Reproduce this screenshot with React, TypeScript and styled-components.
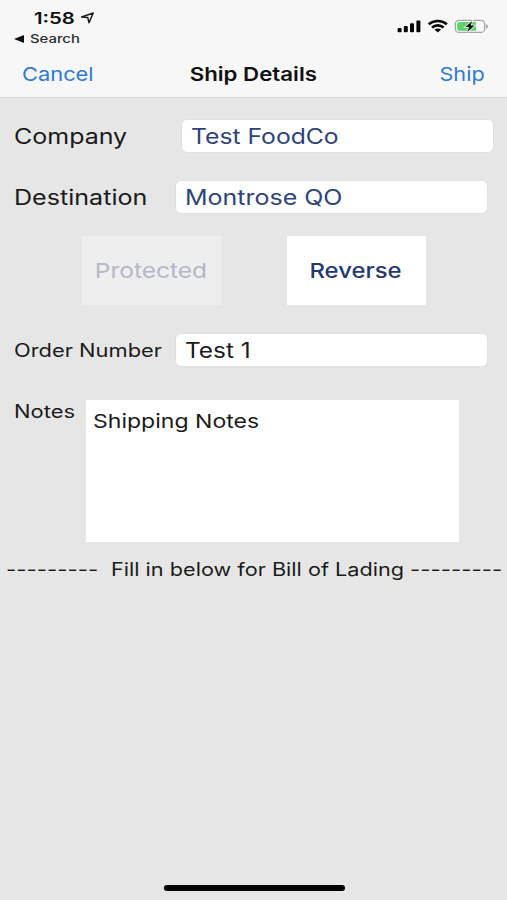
import React from 'react';
import styled, { createGlobalStyle } from 'styled-components';

const GlobalStyle = createGlobalStyle`
  * { box-sizing: border-box; }
  body { margin: 0; background: #e6e6e6; }
`;

const Screen = styled.div`
  width: 507px;
  height: 900px;
  display: flex;
  flex-direction: column;
  overflow: hidden;
  background: #e6e6e6;
  color: #1b1b1b;
  font-family: Inter, sans-serif;
`;

/* Wide lettering: glyphs keep their height and are extended sideways. */
const Wide = styled.span<{ $size: number; $stretch: number; $weight?: number; $origin?: string }>`
  display: inline-block;
  vertical-align: top;
  white-space: pre;
  font-size: ${p => p.$size}px;
  font-weight: ${p => p.$weight ?? 400};
  transform: scaleX(${p => p.$stretch});
  transform-origin: ${p => p.$origin ?? 'left'} center;
`;

const Header = styled.header`
  height: 98px;
  display: flex;
  flex-direction: column;
  background: #f7f7f7;
  border-bottom: 1px solid #d9d9d9;
`;

const StatusBar = styled.div`
  height: 50px;
  display: flex;
  justify-content: space-between;
`;

const StatusLeft = styled.div`
  padding-top: 8px;
  color: #111;
`;

const Clock = styled.div`
  display: flex;
  align-items: center;
  height: 20px;
  padding-left: 34px;
  line-height: 20px;
`;

const ClockTime = styled.div`
  width: 46px;
`;

const BackLink = styled.div`
  display: flex;
  align-items: center;
  gap: 6px;
  height: 22px;
  padding-left: 14px;
  line-height: 20px;
  color: #2c2c2c;
`;

const StatusIcons = styled.div`
  display: flex;
  align-items: center;
  height: 24px;
  margin-top: 14px;
  padding-right: 18px;
`;

const NavBar = styled.nav`
  height: 48px;
  display: grid;
  grid-template-columns: 1fr auto 1fr;
  align-items: center;
  padding: 2px 22px 0 22px;
  line-height: 24px;
`;

const NavAction = styled.a<{ $end?: boolean }>`
  color: #2f7bd3;
  text-align: ${p => (p.$end ? 'right' : 'left')};
`;

const NavTitle = styled.div`
  color: #111;
`;

const Form = styled.main`
  flex: 1;
  display: flex;
  flex-direction: column;
`;

const Field = styled.div<{ $top: number; $label: number; $right: number }>`
  display: grid;
  grid-template-columns: ${p => p.$label}px 1fr;
  align-items: center;
  margin-top: ${p => p.$top}px;
  padding: 0 ${p => p.$right}px 0 14px;
`;

const Label = styled.label`
  height: 32px;
  line-height: 34px;
`;

const Input = styled.div<{ $blue?: boolean }>`
  height: 32px;
  padding-left: 8.5px;
  line-height: 34px;
  border-radius: 5px;
  background: #fff;
  box-shadow: 0 0 0 1px #e0e0e0;
  color: ${p => (p.$blue ? '#2d437c' : '#1b1b1b')};
`;

const Buttons = styled.div`
  display: flex;
  gap: 66px;
  margin-top: 23px;
  padding-left: 82px;
`;

const Button = styled.button<{ $disabled?: boolean }>`
  width: 139px;
  height: 69px;
  padding: 0 1px 0 0;
  border: 0;
  font-family: inherit;
  line-height: 28px;
  text-align: center;
  background: ${p => (p.$disabled ? '#eeeeee' : '#fff')};
  color: ${p => (p.$disabled ? '#b4b7ca' : '#24396f')};
`;

const NotesRow = styled.div`
  display: grid;
  grid-template-columns: 72px 373px;
  margin-top: 34px;
  padding-left: 14.4px;
`;

const NotesLabel = styled.label`
  line-height: 23px;
`;

const NotesArea = styled.div`
  height: 142px;
  padding: 10px 7px;
  line-height: 24px;
  background: #fff;
`;

const Divider = styled.div`
  display: grid;
  grid-template-columns: 104.5px 299px 1fr;
  margin-top: 15px;
  padding-left: 6px;
  line-height: 24px;
`;

const HomeArea = styled.footer`
  height: 15px;
  display: flex;
  justify-content: center;
`;

const HomeIndicator = styled.div`
  width: 181px;
  height: 6px;
  margin-left: 1px;
  border-radius: 3px;
  background: #000;
`;

const LocationIcon = () => (
  <svg width="15" height="14" viewBox="0 0 15 14">
    <path d="M1.6 6 L13.2 2 L9 11.8 L7.7 6.4 Z" fill="none" stroke="#1a1a1a" strokeWidth="1.5" strokeLinejoin="round" />
  </svg>
);

const BackIcon = () => (
  <svg width="10" height="8" viewBox="0 0 10 8">
    <path d="M0 4 L10 0 V8 Z" fill="#111" />
  </svg>
);

const SystemIcons = () => (
  <svg width="92" height="16" viewBox="0 0 92 16">
    <g fill="#080808">
      <rect x="0.6" y="10" width="4" height="4.3" rx="1" />
      <rect x="6.8" y="8" width="4" height="6.3" rx="1" />
      <rect x="13" y="5.3" width="4" height="9" rx="1" />
      <rect x="19.4" y="2.5" width="4" height="11.8" rx="1" />
    </g>
    <g fill="none" stroke="#080808" strokeWidth="2.6">
      <path d="M31.7 6.2 C36.8 1.9 44.8 1.9 49.9 6.2" />
      <path d="M35 9.5 C38.3 6.6 43.3 6.6 46.6 9.5" />
    </g>
    <path d="M37.5 11.6 C39.3 10 42.3 10 44.1 11.6 L40.8 14.5 Z" fill="#080808" />
    <rect x="58.4" y="2.4" width="29.2" height="12" rx="3.5" fill="#fafafa" stroke="#a6a6a6" strokeWidth="1.3" />
    <path d="M62.2 4 H79 V12.8 H62.2 Q60.2 12.8 60.2 10.8 V6 Q60.2 4 62.2 4 Z" fill="#5dd36c" />
    <path d="M88.8 6.1 Q91 7 91 8.4 Q91 9.8 88.8 10.7 Z" fill="#a6a6a6" />
    <path d="M75.2 3 L68.3 9 H72.1 L70.2 14 L77.7 7.5 H73.7 Z" fill="#111" stroke="#f7faf7" strokeWidth="1.5" paintOrder="stroke" />
  </svg>
);

export default function App() {
  return (
    <>
      <GlobalStyle />
      <Screen>
        <Header>
          <StatusBar>
            <StatusLeft>
              <Clock>
                <ClockTime><Wide $size={16} $stretch={1.27} $weight={600}>1:58</Wide></ClockTime>
                <LocationIcon />
              </Clock>
              <BackLink>
                <BackIcon />
                <Wide $size={11.7} $stretch={1.27} $weight={500}>Search</Wide>
              </BackLink>
            </StatusLeft>
            <StatusIcons><SystemIcons /></StatusIcons>
          </StatusBar>
          <NavBar>
            <NavAction><Wide $size={19} $stretch={1.15}>Cancel</Wide></NavAction>
            <NavTitle><Wide $size={19} $stretch={1.172} $weight={600} $origin="center">Ship Details</Wide></NavTitle>
            <NavAction $end><Wide $size={19} $stretch={1.14} $origin="right">Ship</Wide></NavAction>
          </NavBar>
        </Header>
        <Form>
          <Field $top={22} $label={168} $right={14}>
            <Label><Wide $size={21} $stretch={1.19}>Company</Wide></Label>
            <Input $blue><Wide $size={21} $stretch={1.176}>Test FoodCo</Wide></Input>
          </Field>
          <Field $top={29} $label={162} $right={20}>
            <Label><Wide $size={21} $stretch={1.195}>Destination</Wide></Label>
            <Input $blue><Wide $size={21} $stretch={1.19}>Montrose QO</Wide></Input>
          </Field>
          <Buttons>
            <Button $disabled><Wide $size={20.5} $stretch={1.195} $origin="center">Protected</Wide></Button>
            <Button><Wide $size={20.5} $stretch={1.165} $weight={500} $origin="center">Reverse</Wide></Button>
          </Buttons>
          <Field $top={29} $label={162} $right={20}>
            <Label><Wide $size={18} $stretch={1.215}>Order Number</Wide></Label>
            <Input><Wide $size={21} $stretch={1.16}>Test 1</Wide></Input>
          </Field>
          <NotesRow>
            <NotesLabel><Wide $size={18} $stretch={1.22}>Notes</Wide></NotesLabel>
            <NotesArea><Wide $size={19} $stretch={1.213}>Shipping Notes</Wide></NotesArea>
          </NotesRow>
          <Divider>
            <Wide $size={18.3} $stretch={1.22}>---------</Wide>
            <Wide $size={18.3} $stretch={1.185}>Fill in below for Bill of Lading</Wide>
            <Wide $size={18.3} $stretch={1.22}>---------</Wide>
          </Divider>
        </Form>
        <HomeArea><HomeIndicator /></HomeArea>
      </Screen>
    </>
  );
}
